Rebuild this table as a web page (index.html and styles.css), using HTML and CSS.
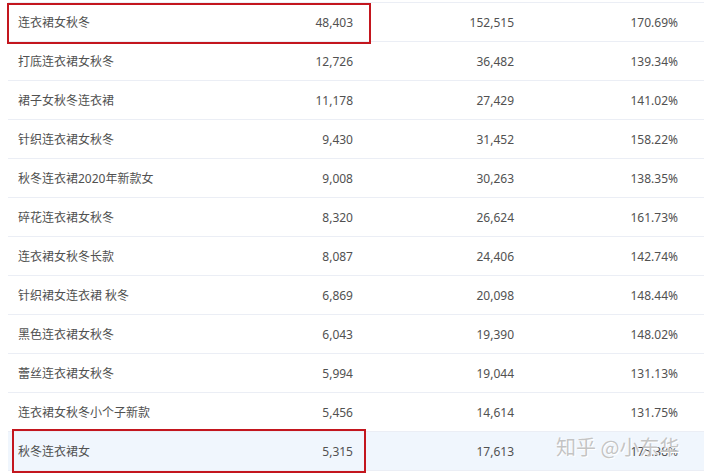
FILE: index.html
```html
<!DOCTYPE html>
<html lang="zh">
<head>
<meta charset="utf-8">
<link rel="stylesheet" href="styles.css">
</head>
<body>
<div class="page">
  <div class="table">
    <div class="row"><div class="kw">连衣裙女秋冬</div><div class="num c2">48,403</div><div class="num c3">152,515</div><div class="num c4">170.69%</div></div>
    <div class="row"><div class="kw">打底连衣裙女秋冬</div><div class="num c2">12,726</div><div class="num c3">36,482</div><div class="num c4">139.34%</div></div>
    <div class="row"><div class="kw">裙子女秋冬连衣裙</div><div class="num c2">11,178</div><div class="num c3">27,429</div><div class="num c4">141.02%</div></div>
    <div class="row"><div class="kw">针织连衣裙女秋冬</div><div class="num c2">9,430</div><div class="num c3">31,452</div><div class="num c4">158.22%</div></div>
    <div class="row"><div class="kw">秋冬连衣裙2020年新款女</div><div class="num c2">9,008</div><div class="num c3">30,263</div><div class="num c4">138.35%</div></div>
    <div class="row"><div class="kw">碎花连衣裙女秋冬</div><div class="num c2">8,320</div><div class="num c3">26,624</div><div class="num c4">161.73%</div></div>
    <div class="row"><div class="kw">连衣裙女秋冬长款</div><div class="num c2">8,087</div><div class="num c3">24,406</div><div class="num c4">142.74%</div></div>
    <div class="row"><div class="kw">针织裙女连衣裙 秋冬</div><div class="num c2">6,869</div><div class="num c3">20,098</div><div class="num c4">148.44%</div></div>
    <div class="row"><div class="kw">黑色连衣裙女秋冬</div><div class="num c2">6,043</div><div class="num c3">19,390</div><div class="num c4">148.02%</div></div>
    <div class="row"><div class="kw">蕾丝连衣裙女秋冬</div><div class="num c2">5,994</div><div class="num c3">19,044</div><div class="num c4">131.13%</div></div>
    <div class="row"><div class="kw">连衣裙女秋冬小个子新款</div><div class="num c2">5,456</div><div class="num c3">14,614</div><div class="num c4">131.75%</div></div>
    <div class="row hover"><div class="kw">秋冬连衣裙女</div><div class="num c2">5,315</div><div class="num c3">17,613</div><div class="num c4">175.38%</div></div>
  </div>
  <div class="mark mark-top"></div>
  <div class="mark mark-bottom"></div>
  <div class="watermark">知乎 @小东华</div>
</div>
</body>
</html>
```
FILE: styles.css
```css
html, body {
  margin: 0;
  padding: 0;
  background: #fff;
  overflow: hidden;
}
.page {
  position: relative;
  width: 704px;
  height: 475px;
  padding-top: 2px;
  box-sizing: border-box;
  font-family: "Noto Sans", "Noto Sans CJK SC", sans-serif;
  font-size: 12px;
  color: #515151;
}
.table {
  margin-left: 8px;
  border-top: 1px solid #ebeef5;
}
.row {
  display: grid;
  grid-template-columns: 200px 160px 161px 1fr;
  height: 38px;
  border-bottom: 1px solid #ebeef5;
  align-items: center;
}
.row.hover {
  background: #f0f6fd;
}
.kw {
  padding-left: 10px;
  white-space: nowrap;
}
.num {
  text-align: right;
}
.c2 { padding-right: 15px; }
.c3 { padding-right: 15px; }
.c4 { padding-right: 26px; }
.mark {
  position: absolute;
  border: 2px solid #c3161e;
  box-sizing: border-box;
}
.mark-top {
  left: 7px;
  top: 3px;
  width: 364px;
  height: 41px;
}
.mark-bottom {
  left: 12px;
  top: 429px;
  width: 354px;
  height: 44px;
}
.watermark {
  position: absolute;
  left: 556px;
  top: 432px;
  font-family: "Noto Sans CJK SC", sans-serif;
  font-size: 20px;
  color: rgba(170, 170, 170, 0.7);
  text-shadow: 0 0 1px #fff, 1px 1px 0 #fff;
  white-space: nowrap;
}
```
